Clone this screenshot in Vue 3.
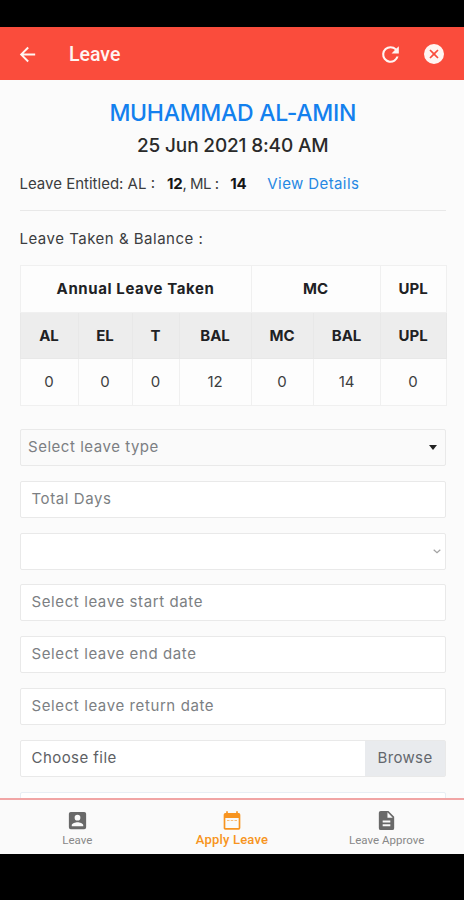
<script setup>
const fields = [
  { text: 'Total Days', kind: 'days' },
  { text: '', kind: 'picker' },
  { text: 'Select leave start date', kind: 'start' },
  { text: 'Select leave end date', kind: 'end' },
  { text: 'Select leave return date', kind: 'return' },
]
const heads = ['AL', 'EL', 'T', 'BAL', 'MC', 'BAL', 'UPL']
const values = [0, 0, 0, 12, 0, 14, 0]
</script>

<template>
  <div class="screen">
    <header class="appbar">
      <svg class="back" viewBox="0 0 24 24"><path d="M20 11H7.83l5.59-5.59L12 4l-8 8 8 8 1.41-1.41L7.83 13H20z" /></svg>
      <h1>Leave</h1>
      <svg class="refresh" viewBox="0 0 24 24"><path d="M17.65 6.35A7.96 7.96 0 0 0 12 4a8 8 0 1 0 7.73 10h-2.08A6 6 0 1 1 12 6c1.66 0 3.14.69 4.22 1.78L13 11h7V4z" /></svg>
      <svg class="close" viewBox="0 0 24 24"><path d="M12 2a10 10 0 1 0 0 20 10 10 0 0 0 0-20zm4.600 13.400L15.400 16.600 12 13.200 8.600 16.600 7.400 15.400 10.800 12 7.400 8.600 8.600 7.400 12 10.800 15.400 7.400 16.600 8.600 13.200 12z" /></svg>
    </header>

    <main>
      <h2>MUHAMMAD AL-AMIN</h2>
      <p class="date">25 Jun 2021 8:40 AM</p>
      <p class="entitled">
        <span class="al">Leave Entitled: AL :</span><b>12</b><span class="ml">, ML :</span><b class="mlv">14</b><a>View Details</a>
      </p>
      <p class="taken"><span>Leave Taken &amp; Balance :</span></p>

      <table>
        <colgroup><col class="c1"><col class="c2"><col class="c3"><col class="c4"><col class="c5"><col class="c6"><col class="c7"></colgroup>
        <tbody>
          <tr><th colspan="4" class="wide">Annual Leave Taken</th><th colspan="2">MC</th><th>UPL</th></tr>
          <tr class="shade"><th v-for="(h, i) in heads" :key="i">{{ h }}</th></tr>
          <tr><td v-for="(v, i) in values" :key="i">{{ v }}</td></tr>
        </tbody>
      </table>

      <div class="form">
        <div class="field type"><span>Select leave type</span><svg class="caret" viewBox="0 0 8 5"><path d="M0 0h8L4 5z" /></svg></div>
        <div v-for="f in fields" :key="f.kind" class="field" :class="f.kind">
          <span>{{ f.text }}</span>
          <svg v-if="f.kind === 'picker'" class="chev" viewBox="0 0 8 5"><path d="M.7.8 4 3.8 7.3.8" /></svg>
        </div>
        <div class="field file"><span>Choose file</span><div class="browse">Browse</div></div>
        <div class="field last"></div>
      </div>
    </main>

    <nav>
      <div class="tab">
        <svg viewBox="0 0 24 24"><path d="M3 5v14a2 2 0 0 0 2 2h14a2 2 0 0 0 2-2V5a2 2 0 0 0-2-2H5a2 2 0 0 0-2 2zm12 4a3 3 0 1 1-6 0 3 3 0 0 1 6 0zm-9 8c0-2 4-3.100 6-3.100s6 1.100 6 3.100v1H6z" /></svg>
        <span>Leave</span>
      </div>
      <div class="tab active">
        <svg viewBox="0 0 24 24"><path d="M20 3h-1V1h-2v2H7V1H5v2H4a2 2 0 0 0-2 2v16c0 1.100.9 2 2 2h16a2 2 0 0 0 2-2V5a2 2 0 0 0-2-2zm0 18H4V9h16z" /><path class="dots" d="M6 12h3M10.500 12h3M15 12h3" /></svg>
        <span>Apply Leave</span>
      </div>
      <div class="tab approve">
        <svg viewBox="0 0 24 24"><path d="M14 2H6a2 2 0 0 0-2 2v16a2 2 0 0 0 2 2h12a2 2 0 0 0 2-2V8zm2 16H8v-2h8zm0-4H8v-2h8zm-3-5V3.500L18.500 9z" /></svg>
        <span>Leave Approve</span>
      </div>
    </nav>
  </div>
</template>

<style>
body { margin: 0; background: #000; }
</style>

<style scoped>
* { box-sizing: border-box; }
.screen { width: 464px; height: 900px; padding: 27px 0 46px; background: #000; display: flex; flex-direction: column; font-family: Inter, "Open Sans", sans-serif; color: #3c3d40; overflow: hidden; }
svg { fill: currentColor; flex: none; display: block; }
h1, h2, p { margin: 0; }
.appbar { height: 53px; flex: none; background: #fa4c3c; color: #fff5f2; display: flex; align-items: center; padding: 1px 18px 0 16px; }
.back { width: 23px; height: 23px; }
h1 { font: 500 19.5px/28px Roboto, sans-serif; margin-left: 30px; flex: 1; padding-top: 2px; letter-spacing: 0; }
.refresh { width: 25px; height: 25px; margin-right: 19px; }
.close { width: 24px; height: 24px; }
main { flex: 1; min-height: 0; overflow: hidden; background: #fbfbfb; padding: 17px 18px 0 19.500px; }
h2 { text-align: center; color: #1380ee; font-weight: 500; font-size: 23px; line-height: 33px; letter-spacing: -.3px; }
.date { text-align: center; font-weight: 500; font-size: 19px; line-height: 32px; letter-spacing: -.15px; color: #2a2a2a; }
.entitled { display: flex; height: 49px; padding-top: 9px; margin-bottom: 14px; border-bottom: 1px solid #e8e8e8; font-size: 15px; line-height: 26px; white-space: pre; }
.entitled b { font-weight: 700; color: #151515; margin-left: 12px; letter-spacing: -.2px; }
.ml { letter-spacing: -.5px; }
.entitled b.mlv { margin-left: 11.500px; }
.entitled a { color: #2688e3; margin-left: 21px; letter-spacing: .4px; }
.taken { font-size: 15px; line-height: 28px; height: 40px; letter-spacing: .5px; }
table { border-collapse: collapse; table-layout: fixed; width: 426px; color: #3c3d40; }
.c1 { width: 58px } .c2 { width: 54px } .c3 { width: 47px } .c4 { width: 72px } .c5 { width: 62px } .c6 { width: 67px } .c7 { width: 66px }
th, td { height: 46.500px; padding: 1px 0 0; border: 1px solid #f0f0f0; text-align: center; font-size: 15px; line-height: 20px; background: #fdfdfd; }
th { font-weight: 700; color: #202124; }
.wide { letter-spacing: .6px; }
.shade th { background: #ededed; border-color: #e8e8e8; }
.form { padding-top: 23.500px; display: flex; flex-direction: column; gap: 14.800px; width: 426.500px; }
.field { height: 37px; flex: none; border: 1px solid #e9e9e9; border-radius: 2px; background: #fff; padding-left: 11px; display: flex; align-items: center; justify-content: space-between; color: #7c7f83; font-size: 15px; letter-spacing: .6px; }
.field > span { margin-top: -2px; }
.type { background: #fafafa; padding-left: 7.500px; letter-spacing: .53px; }
.caret { width: 8px; height: 5px; margin-right: 8px; color: #222; }
.chev { width: 8px; height: 5px; margin-right: 4px; fill: none; stroke: #a2a2a2; stroke-width: 1.200; }
.file { color: #5e6165; letter-spacing: .45px; }
.browse { align-self: stretch; width: 80px; display: flex; align-items: center; justify-content: center; background: #e9ebee; color: #63676d; padding-bottom: 1px; letter-spacing: .35px; }
.last { border-color: #e8eef4; }
nav { height: 56px; flex: none; border-top: 2px solid #f1a5a5; background: #fafafa; display: grid; grid-template-columns: repeat(3, 1fr); font-family: Roboto, sans-serif; }
.tab { display: flex; flex-direction: column; align-items: center; padding-top: 9px; color: #696969; }
.tab svg { width: 23px; height: 23px; }
.tab span { font-size: 11.500px; line-height: 14px; margin-top: 1px; color: #888; }
.tab.active { color: #f79420; }
.active svg { width: 20px; height: 21px; margin-top: 1px; }
.tab.active span { font-size: 13px; line-height: 15px; margin-top: 1px; color: #f79420; letter-spacing: .2px; font-weight: 500; }
.dots { stroke: currentColor; stroke-width: 1.400; opacity: .6; }
</style>
